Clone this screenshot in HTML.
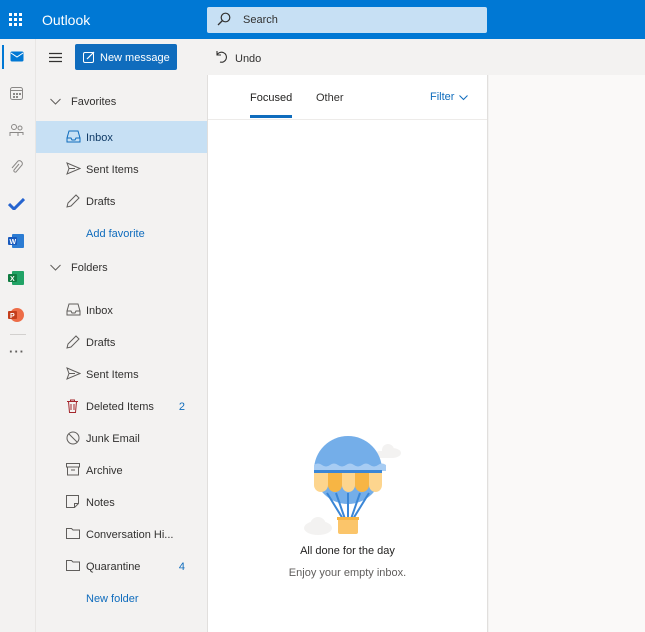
<!DOCTYPE html><html><head><style>
*{margin:0;padding:0;box-sizing:border-box}
body{width:645px;height:632px;overflow:hidden;font-family:"Liberation Sans",sans-serif;font-size:11px;color:#323130;background:#f3f2f1;position:relative}
.top{position:absolute;left:0;top:0;width:645px;height:39px;background:#0078d4;color:#fff}
.abs{position:absolute}
.rail{position:absolute;left:0;top:39px;width:36px;height:593px;background:#f3f2f1;border-right:1px solid #e8e6e4}
.list{position:absolute;left:207px;top:75px;width:281px;height:557px;background:#fff;border-left:1px solid #e1dfdd;border-right:1px solid #e1dfdd}
.right{position:absolute;left:489px;top:75px;width:156px;height:557px;background:#faf9f8}
.item{position:absolute;left:36px;width:171px;height:32px;line-height:34px;padding-left:50px;font-size:11px}
.item svg{position:absolute;left:30px;top:9px}
.cnt{position:absolute;right:22px;color:#0f6cbd}
</style></head><body>
<div class="top">
<svg class="abs" style="left:9px;top:13px" width="13" height="13"><g fill="#fff"><rect x="0" y="0" width="3" height="3"/><rect x="5" y="0" width="3" height="3"/><rect x="10" y="0" width="3" height="3"/><rect x="0" y="5" width="3" height="3"/><rect x="5" y="5" width="3" height="3"/><rect x="10" y="5" width="3" height="3"/><rect x="0" y="10" width="3" height="3"/><rect x="5" y="10" width="3" height="3"/><rect x="10" y="10" width="3" height="3"/></g></svg>
<div class="abs" style="left:42px;top:12px;font-size:14px">Outlook</div>
<div class="abs" style="left:207px;top:7px;width:280px;height:26px;background:#c7e0f4;border-radius:2px"></div>
<svg class="abs" style="left:217px;top:12px" width="14" height="14"><circle cx="8.5" cy="5.5" r="4.3" fill="none" stroke="#323130" stroke-width="1.2"/><path d="M5.5 8.5L1 13" stroke="#323130" stroke-width="1.3"/></svg>
<div class="abs" style="left:243px;top:14px;font-size:11px;color:#323130">Search</div>
</div>
<div class="rail">
<div class="abs" style="left:2px;top:6px;width:2px;height:24px;background:#0078d4"></div>
<svg class="abs" style="left:10px;top:12px" width="14" height="11"><rect x="0.5" y="0.5" width="13" height="10" rx="1.5" fill="#0078d4"/><path d="M1 2l6 4 6-4" stroke="#fff" fill="none"/></svg>
<svg class="abs" style="left:10px;top:48px" width="13" height="13"><rect x="0.5" y="0.5" width="12" height="12" rx="2" fill="none" stroke="#8a8886"/><path d="M1 3.5h11" stroke="#8a8886"/><g fill="#8a8886"><rect x="3" y="6" width="2" height="2"/><rect x="6" y="6" width="2" height="2"/><rect x="9" y="6" width="2" height="2"/><rect x="3" y="9" width="2" height="2"/><rect x="6" y="9" width="2" height="2"/></g></svg>
<svg class="abs" style="left:9px;top:85px" width="15" height="13"><circle cx="5" cy="3" r="2.5" fill="none" stroke="#8a8886"/><circle cx="11" cy="4" r="2" fill="none" stroke="#8a8886"/><path d="M1 12V8.5h8V12M9 11V8.5h5V11" fill="none" stroke="#8a8886"/></svg>
<svg class="abs" style="left:10px;top:121px" width="13" height="14"><path d="M9 4L4 10a1.5 1.5 0 0 0 2 2l6-7a3 3 0 0 0-4-4L2 8" fill="none" stroke="#8a8886"/></svg>
<svg class="abs" style="left:8px;top:159px" width="17" height="12"><path d="M1 6l5 5L16 1" stroke="#2564cf" stroke-width="3" fill="none"/></svg>
<svg class="abs" style="left:8px;top:195px" width="16" height="14"><rect x="4" y="0" width="12" height="14" rx="1" fill="#2b7cd3"/><rect x="0" y="3" width="9" height="8" rx="1" fill="#185abd"/><text x="1.5" y="10" font-size="7" fill="#fff" font-family="Liberation Sans" font-weight="bold">W</text></svg>
<svg class="abs" style="left:8px;top:232px" width="16" height="14"><rect x="4" y="0" width="12" height="14" rx="1" fill="#21a366"/><rect x="0" y="3" width="9" height="8" rx="1" fill="#107c41"/><text x="2" y="10" font-size="7" fill="#fff" font-family="Liberation Sans" font-weight="bold">X</text></svg>
<svg class="abs" style="left:8px;top:268px" width="16" height="16"><circle cx="9" cy="8" r="7" fill="#ed6c47"/><rect x="0" y="4" width="9" height="8" rx="1" fill="#c43e1c"/><text x="2" y="11" font-size="7" fill="#fff" font-family="Liberation Sans" font-weight="bold">P</text></svg>
<div class="abs" style="left:10px;top:295px;width:16px;height:1px;background:#d2d0ce"></div>
<div class="abs" style="left:9px;top:305px;font-size:13px;color:#605e5c;letter-spacing:1px;font-weight:bold">···</div>
</div>
<svg class="abs" style="left:49px;top:52px" width="13" height="11"><path d="M0 1.5h13M0 5.5h13M0 9.5h13" stroke="#323130" stroke-width="1.2"/></svg>
<div class="abs" style="left:75px;top:44px;width:102px;height:26px;background:#0f6cbd;border-radius:2px;color:#fff;font-size:11px;line-height:28px;padding-left:25px">New message</div>
<svg class="abs" style="left:83px;top:51px" width="12" height="12"><rect x="0.5" y="1.5" width="10" height="10" rx="1.5" fill="none" stroke="#fff"/><path d="M4 8l7-7" stroke="#fff" stroke-width="1.2"/></svg>
<svg class="abs" style="left:215px;top:50px" width="13" height="14"><path d="M2 1v4h4M2 5a5 5 0 1 1 3 7" fill="none" stroke="#323130" stroke-width="1.1"/></svg>
<div class="abs" style="left:235px;top:53px;font-size:11px">Undo</div>
<svg class="abs" style="left:50px;top:98px" width="11" height="7"><path d="M0.5 1l5 5 5-5" fill="none" stroke="#605e5c"/></svg>
<div class="abs" style="left:71px;top:96px;font-size:11px">Favorites</div>
<div class="abs" style="left:36px;top:121px;width:171px;height:32px;background:#c7e0f4"></div>
<div class="item" style="top:121px;color:#0f3a66">Inbox<svg width="15" height="13"><path d="M1 8l2-7h9l2 7v4H1zM1 8h4l1 2h3l1-2h4" fill="none" stroke="#0f6cbd"/></svg></div>
<div class="item" style="top:153px">Sent Items<svg width="15" height="13"><path d="M1 1l13 5.5L1 12l2-5.5zM3 6.5h6" fill="none" stroke="#605e5c"/></svg></div>
<div class="item" style="top:185px">Drafts<svg width="14" height="14"><path d="M1 13l1-4 8-8 3 3-8 8z" fill="none" stroke="#605e5c"/></svg></div>
<div class="item" style="top:217px;color:#0f6cbd">Add favorite</div>
<svg class="abs" style="left:50px;top:264px" width="11" height="7"><path d="M0.5 1l5 5 5-5" fill="none" stroke="#605e5c"/></svg>
<div class="abs" style="left:71px;top:262px;font-size:11px">Folders</div>
<div class="item" style="top:294px">Inbox<svg width="15" height="13"><path d="M1 8l2-7h9l2 7v4H1zM1 8h4l1 2h3l1-2h4" fill="none" stroke="#605e5c"/></svg></div>
<div class="item" style="top:326px">Drafts<svg width="14" height="14"><path d="M1 13l1-4 8-8 3 3-8 8z" fill="none" stroke="#605e5c"/></svg></div>
<div class="item" style="top:358px">Sent Items<svg width="15" height="13"><path d="M1 1l13 5.5L1 12l2-5.5zM3 6.5h6" fill="none" stroke="#605e5c"/></svg></div>
<div class="item" style="top:390px">Deleted Items<span class="cnt">2</span><svg width="13" height="14"><path d="M1 2.5h11M4.5 2.5V1h4v1.5M2.5 2.5l1 11h6l1-11M5 5v6M8 5v6" fill="none" stroke="#a4262c"/></svg></div>
<div class="item" style="top:422px">Junk Email<svg width="14" height="14"><circle cx="7" cy="7" r="6" fill="none" stroke="#605e5c"/><path d="M3 3l8 8" stroke="#605e5c"/></svg></div>
<div class="item" style="top:454px">Archive<svg width="14" height="13"><rect x="0.5" y="0.5" width="13" height="3.5" fill="none" stroke="#605e5c"/><path d="M1.5 4v8h11V4M5 7h4" fill="none" stroke="#605e5c"/></svg></div>
<div class="item" style="top:486px">Notes<svg width="13" height="13"><path d="M0.5 0.5h12v8l-4 4h-8zM8.5 12.5v-4h4" fill="none" stroke="#605e5c"/></svg></div>
<div class="item" style="top:518px">Conversation Hi...<svg width="14" height="12"><path d="M0.5 1.5h5l1.5 1.5h6.5v8.5H0.5z" fill="none" stroke="#605e5c"/></svg></div>
<div class="item" style="top:550px">Quarantine<span class="cnt">4</span><svg width="14" height="12"><path d="M0.5 1.5h5l1.5 1.5h6.5v8.5H0.5z" fill="none" stroke="#605e5c"/></svg></div>
<div class="item" style="top:582px;color:#0f6cbd">New folder</div>
<div class="list">
<div class="abs" style="left:42px;top:17px;font-size:11px;color:#201f1e">Focused</div>
<div class="abs" style="left:42px;top:40px;width:42px;height:3px;background:#0f6cbd"></div>
<div class="abs" style="left:108px;top:17px;font-size:11px">Other</div>
<div class="abs" style="left:222px;top:16px;font-size:11px;color:#0f6cbd">Filter</div>
<svg class="abs" style="left:251px;top:20px" width="9" height="6"><path d="M0.5 0.5l4 4 4-4" fill="none" stroke="#0f6cbd"/></svg>
<div class="abs" style="left:0;top:44px;width:279px;height:1px;background:#edebe9"></div>
<svg class="abs" style="left:88px;top:360px" width="105" height="100">
<ellipse cx="96" cy="18" rx="9" ry="5" fill="#f3f2f1"/><circle cx="92" cy="15" r="6" fill="#f3f2f1"/><rect x="80" y="16" width="20" height="7" rx="3.5" fill="#f3f2f1"/>
<ellipse cx="22" cy="93" rx="14" ry="7" fill="#f3f2f1"/><circle cx="22" cy="90" r="8" fill="#f3f2f1"/>
<circle cx="52" cy="35" r="34" fill="#74aee9"/>
<path d="M18 30q4-3 8 0t8 0 8 0 8 0 8 0 8 0 8 0 8 0 8 0V36H18z" fill="#a7ccf3"/>
<rect x="18" y="35" width="68" height="3" fill="#3a86d6"/>
<path d="M31 58L47 84M40 58L49 84M52 58L52 84M64 58L55 84M73 58L57 84" stroke="#3a86d6" stroke-width="2"/>
<g><path d="M18 38h14v12a7 7 0 0 1-14 0z" fill="#fdd58e"/><path d="M32 38h14v12a7 7 0 0 1-14 0z" fill="#f7b544"/><path d="M46 38h13v12a6.5 7 0 0 1-13 0z" fill="#fdd58e"/><path d="M59 38h14v12a7 7 0 0 1-14 0z" fill="#f7b544"/><path d="M73 38h13v12a6.5 7 0 0 1-13 0z" fill="#fdd58e"/></g>
<rect x="42" y="83" width="20" height="16" rx="2" fill="#fbc56a"/><rect x="41" y="82" width="22" height="3" fill="#f7b544"/>
</svg>
<div class="abs" style="left:0;width:279px;top:470px;text-align:center;font-size:11px;color:#201f1e">All done for the day</div>
<div class="abs" style="left:0;width:279px;top:492px;text-align:center;font-size:11px;color:#605e5c">Enjoy your empty inbox.</div>
</div>
<div class="right"></div>
</body></html>
